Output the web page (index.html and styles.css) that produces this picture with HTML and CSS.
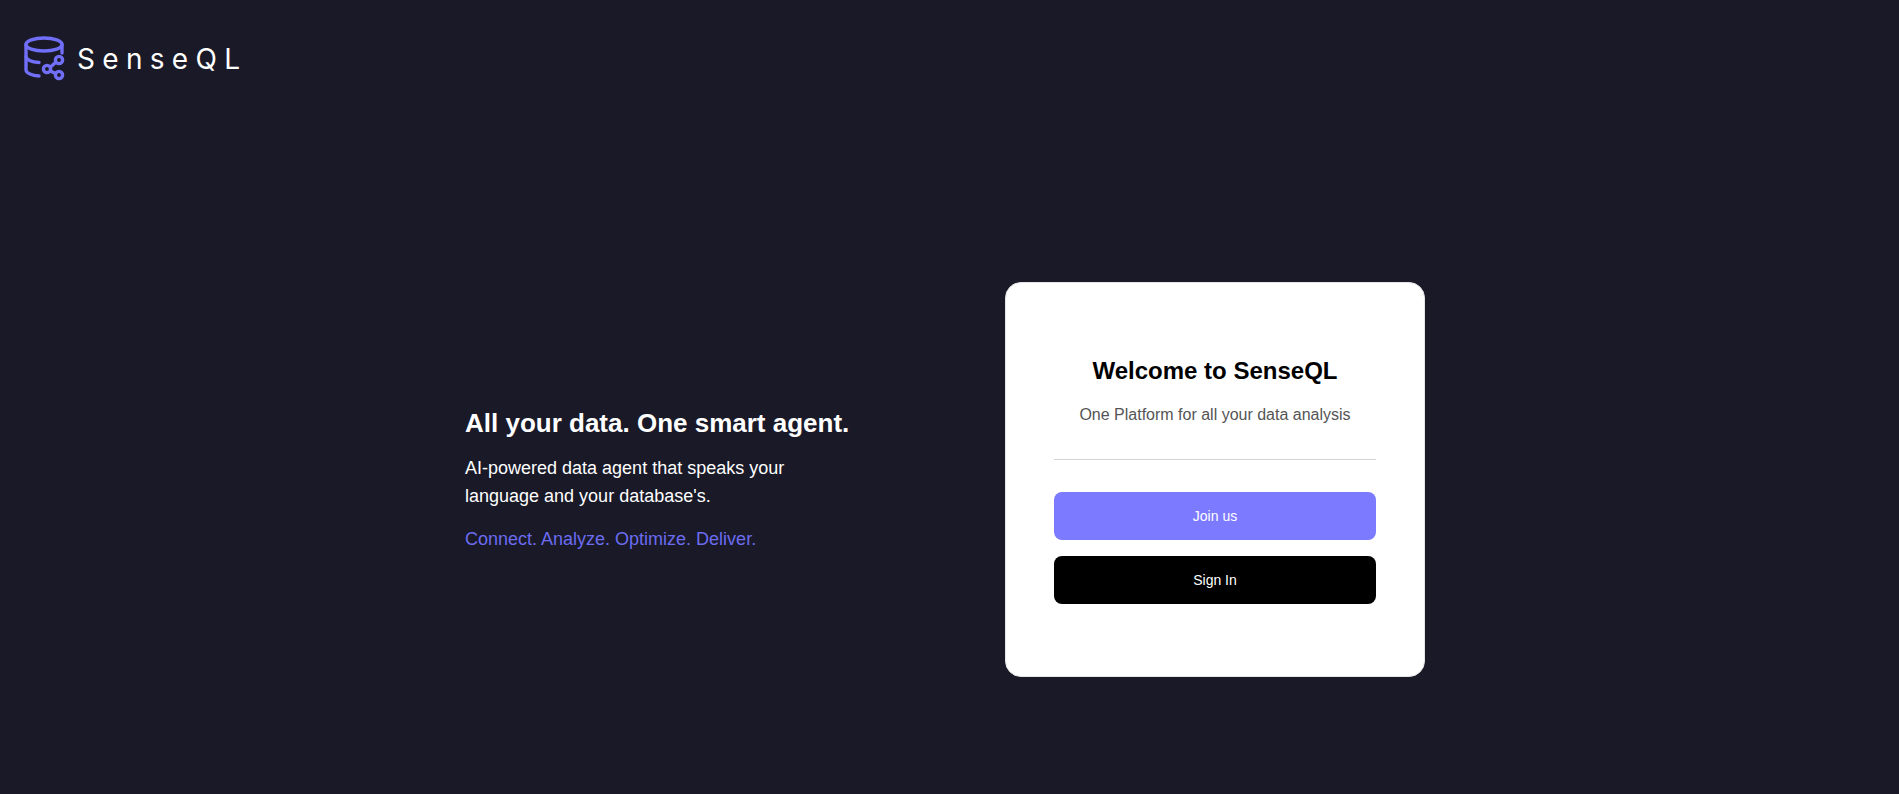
FILE: index.html
```html
<!DOCTYPE html>
<html lang="en">
<head>
<meta charset="utf-8">
<title>SenseQL</title>
<link rel="stylesheet" href="styles.css">
</head>
<body>
<div class="page">
  <header class="topbar">
    <svg class="logo-icon" width="42" height="46" viewBox="0 0 42 46" fill="none" stroke="#716ef8" stroke-width="3.4" stroke-linecap="round" stroke-linejoin="round">
      <ellipse cx="20" cy="9.500" rx="18" ry="6.500"/>
      <path d="M2 9.500V35C2 38 8 40.500 15 41"/>
      <path d="M38 9.500V18"/>
      <path d="M2 22C3 25.500 8 27 15 27.500"/>
      <circle cx="35" cy="25" r="3.600"/>
      <circle cx="23" cy="34" r="3.600"/>
      <circle cx="35" cy="40" r="3.600"/>
      <path d="M26.500 32L31.500 27.500M26.500 36L31.500 38.500"/>
    </svg>
    <span class="logo-text">SenseQL</span>
  </header>
  <main class="hero">
    <section class="intro">
      <h2 class="intro-title">All your data. One smart agent.</h2>
      <p class="intro-text">AI-powered data agent that speaks your language and your database's.</p>
      <p class="intro-tag">Connect. Analyze. Optimize. Deliver.</p>
    </section>
    <section class="card">
      <h1 class="card-title">Welcome to SenseQL</h1>
      <p class="card-sub">One Platform for all your data analysis</p>
      <hr class="card-rule">
      <div class="card-actions">
        <button class="btn btn-join" type="button">Join us</button>
        <button class="btn btn-sign" type="button">Sign In</button>
      </div>
    </section>
  </main>
</div>
</body>
</html>
```
FILE: styles.css
```css
* { box-sizing: border-box; }
html, body { margin: 0; height: 100%; }
body {
  background: #191927;
  font-family: "Liberation Sans", Arial, sans-serif;
  overflow: hidden;
}
.page { height: 794px; display: flex; flex-direction: column; }
.topbar {
  height: 100px;
  flex: none;
  display: flex;
  align-items: flex-start;
  padding: 35px 24px 0;
}
.logo-icon { flex: none; }
.logo-text {
  margin-left: 11px;
  font-family: "Inter", sans-serif;
  font-size: 28px;
  font-weight: 400;
  line-height: 48px;
  letter-spacing: 7.300px;
  color: #fff;
}
.hero {
  flex: 1;
  display: flex;
  align-items: center;
  justify-content: center;
  padding: 65px 9px 0 0;
}
.intro { width: 540px; flex: none; padding-right: 156px; }
.intro-title {
  margin: 0 0 15px;
  font-size: 26px;
  line-height: 32px;
  font-weight: 700;
  color: #fff;
  white-space: nowrap;
}
.intro-text {
  margin: 0 0 16px;
  font-size: 18px;
  line-height: 28px;
  color: #fff;
}
.intro-tag {
  margin: 0;
  font-size: 18px;
  line-height: 27px;
  color: #6c6cf0;
}
.card {
  width: 420px;
  height: 395px;
  flex: none;
  background: #fff;
  border: 1px solid #e5e5e5;
  border-radius: 16px;
  padding: 72px 48px 0;
  text-align: center;
}
.card-title {
  margin: 0;
  font-size: 24px;
  line-height: 32px;
  font-weight: 700;
  color: #000;
}
.card-sub {
  margin: 16px 0 0;
  font-size: 16px;
  line-height: 24px;
  color: #555;
}
.card-rule {
  margin: 32px 0 0;
  border: 0;
  border-top: 1px solid #d4d4d4;
}
.card-actions {
  margin-top: 32px;
  display: flex;
  flex-direction: column;
  gap: 16px;
}
.btn {
  height: 48px;
  border: 0;
  border-radius: 8px;
  font-family: inherit;
  font-size: 14px;
  color: #fff;
}
.btn-join { background: #7c7aff; }
.btn-sign { background: #000; }
```
